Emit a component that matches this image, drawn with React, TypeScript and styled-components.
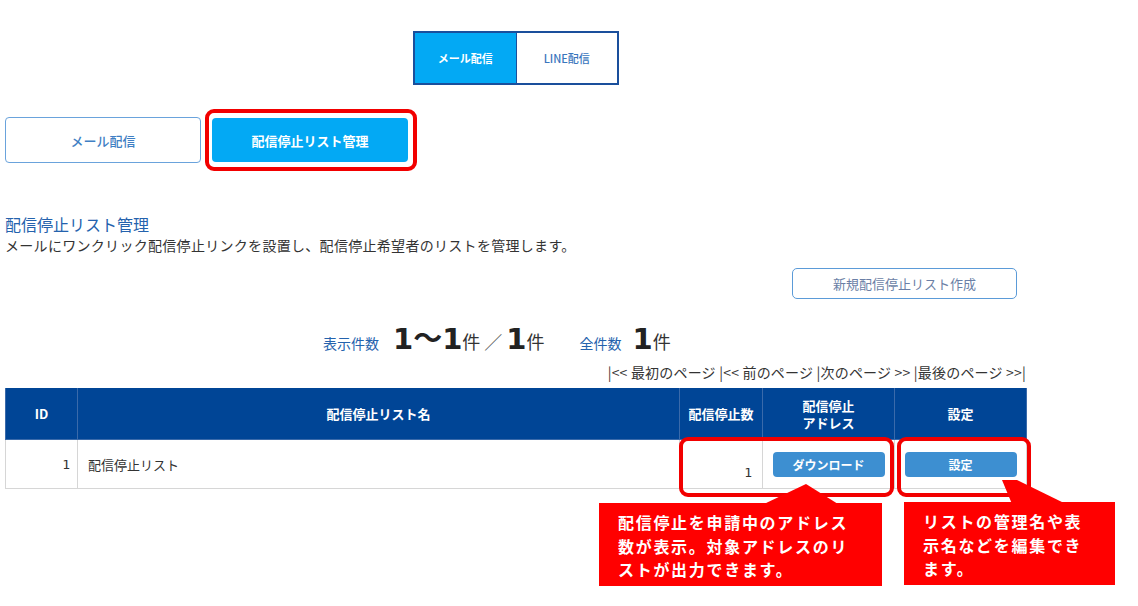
import styled, { createGlobalStyle } from "styled-components";

const GlobalStyle = createGlobalStyle`
  body {
    margin: 0;
    background: #ffffff;
    font-family: "Noto Sans CJK JP", "Noto Sans", sans-serif;
    color: #333333;
  }
`;

const rows = [{ id: 1, name: "配信停止リスト", count: 1 }];

const pagerLinks = ["<< 最初のページ ", "<< 前のページ ", "次のページ >> ", "最後のページ >>"];

function App() {
  return (
    <Page>
      <GlobalStyle />
      <Content>
        <TabGroup>
          <Tab $active>メール配信</Tab>
          <Tab>LINE配信</Tab>
        </TabGroup>

        <SubNav>
          <SubButton>メール配信</SubButton>
          <SubButton $active>配信停止リスト管理</SubButton>
        </SubNav>

        <Title>配信停止リスト管理</Title>
        <Description>
          メールにワンクリック配信停止リンクを設置し、配信停止希望者のリストを管理します。
        </Description>

        <ActionRow>
          <CreateButton>新規配信停止リスト作成</CreateButton>
        </ActionRow>

        <CountLine>
          <CountLabel>表示件数</CountLabel>
          <CountNumber>1〜1</CountNumber>
          <CountUnit>件</CountUnit>
          <Slash>／</Slash>
          <CountNumber>1</CountNumber>
          <CountUnit>件</CountUnit>
          <CountLabel $gap>全件数</CountLabel>
          <CountNumber>1</CountNumber>
          <CountUnit>件</CountUnit>
        </CountLine>

        <Pager>
          {pagerLinks.map((link) => (
            <span key={link}>|{link}</span>
          ))}
          |
        </Pager>

        <Table>
          <colgroup>
            <col style={{ width: 72 }} />
            <col />
            <col style={{ width: 83 }} />
            <col style={{ width: 132 }} />
            <col style={{ width: 132 }} />
          </colgroup>
          <thead>
            <tr>
              <Th>ID</Th>
              <Th>配信停止リスト名</Th>
              <Th>配信停止数</Th>
              <Th>
                配信停止
                <br />
                アドレス
              </Th>
              <Th>設定</Th>
            </tr>
          </thead>
          <tbody>
            {rows.map((row) => (
              <tr key={row.id}>
                <IdCell>{row.id}</IdCell>
                <NameCell>{row.name}</NameCell>
                <NumberCell>{row.count}</NumberCell>
                <ButtonCell>
                  <RowButton>ダウンロード</RowButton>
                </ButtonCell>
                <ButtonCell>
                  <RowButton>設定</RowButton>
                </ButtonCell>
              </tr>
            ))}
          </tbody>
        </Table>
      </Content>

      {/* explanation markers */}
      <Highlight style={{ left: 205, top: 109, width: 212, height: 62 }} />
      <Highlight style={{ left: 679, top: 437, width: 215, height: 60 }} />
      <Highlight style={{ left: 897, top: 437, width: 134, height: 60 }} />

      <Pointer width="1138" height="606">
        <polygon points="764,504 806,484 838,504" fill="#ff0000" />
        <polygon points="1002,480 1017,480 1066,504 1012,504" fill="#ff0000" />
      </Pointer>

      <Callout $padRight={30} style={{ left: 599, top: 503, width: 283, height: 83 }}>
        配信停止を申請中のアドレス数が表示。対象アドレスのリストが出力できます。
      </Callout>
      <Callout $padRight={20} style={{ left: 904, top: 502, width: 211, height: 83 }}>
        リストの管理名や表示名などを編集できます。
      </Callout>
    </Page>
  );
}

const Page = styled.div`
  position: relative;
  width: 1138px;
  height: 606px;
  overflow: hidden;
`;

const Content = styled.div`
  width: 1022px;
  margin-left: 5px;
  padding-top: 31px;
  display: flex;
  flex-direction: column;
`;

const TabGroup = styled.div`
  align-self: center;
  display: flex;
  border: 2px solid #1a4f9c;
  box-sizing: border-box;
  width: 206px;
  height: 54px;
`;

const Tab = styled.div<{ $active?: boolean }>`
  flex: 1;
  display: flex;
  align-items: center;
  justify-content: center;
  font-size: 11px;
  font-weight: ${(p) => (p.$active ? 700 : 500)};
  color: ${(p) => (p.$active ? "#ffffff" : "#3a76bd")};
  background: ${(p) => (p.$active ? "#03a9f4" : "#ffffff")};
  border-right: ${(p) => (p.$active ? "1px solid #1a4f9c" : "none")};
`;

const SubNav = styled.div`
  display: flex;
  gap: 11px;
  margin-top: 32px;
  align-items: center;
`;

const SubButton = styled.div<{ $active?: boolean }>`
  width: 196px;
  height: ${(p) => (p.$active ? "44px" : "46px")};
  box-sizing: border-box;
  display: flex;
  align-items: center;
  justify-content: center;
  border-radius: 4px;
  font-size: 13px;
  font-weight: ${(p) => (p.$active ? 700 : 500)};
  color: ${(p) => (p.$active ? "#ffffff" : "#3f7fc4")};
  background: ${(p) => (p.$active ? "#03a9f4" : "#ffffff")};
  border: ${(p) => (p.$active ? "none" : "1px solid #6aa3dc")};
`;

const Title = styled.h2`
  margin: 50px 0 0;
  font-size: 16px;
  font-weight: 400;
  line-height: 22px;
  color: #2462ad;
`;

const Description = styled.p`
  margin: 0;
  font-size: 14px;
  line-height: 20px;
  letter-spacing: 0.3px;
  color: #333333;
`;

const ActionRow = styled.div`
  display: flex;
  justify-content: flex-end;
  margin-top: 13px;
  padding-right: 10px;
`;

const CreateButton = styled.div`
  width: 225px;
  height: 31px;
  box-sizing: border-box;
  border: 1px solid #5b9bd8;
  border-radius: 5px;
  display: flex;
  align-items: center;
  justify-content: center;
  font-size: 13px;
  color: #6b7fa6;
`;

const CountLine = styled.div`
  display: flex;
  align-items: baseline;
  padding-left: 318px;
  margin-top: 16px;
  height: 46px;
`;

const CountLabel = styled.span<{ $gap?: boolean }>`
  font-size: 14px;
  color: #2462ad;
  margin-right: ${(p) => (p.$gap ? "11px" : "14px")};
  margin-left: ${(p) => (p.$gap ? "35px" : "0")};
`;

const CountNumber = styled.span`
  font-family: "DejaVu Sans", "Noto Sans CJK JP", sans-serif;
  font-size: 29px;
  font-weight: 700;
  color: #222222;
`;

const CountUnit = styled.span`
  font-size: 18px;
  color: #333333;
`;

const Slash = styled.span`
  font-size: 18px;
  color: #555555;
  margin: 0 4px;
`;

const Pager = styled.div`
  text-align: right;
  font-size: 14px;
  line-height: 20px;
  letter-spacing: 0.2px;
  color: #333333;
  padding-right: 1px;
  margin-top: 1px;
`;

const Table = styled.table`
  width: 1022px;
  margin-top: 6px;
  border-collapse: collapse;
  table-layout: fixed;
`;

const Th = styled.th`
  height: 51px;
  padding: 0;
  background: #004596;
  color: #ffffff;
  font-size: 13px;
  font-weight: 700;
  line-height: 17px;
  border: 1px solid #3a6aaa;
  border-top: none;
`;

const Td = styled.td`
  height: 48px;
  padding-top: 0;
  padding-bottom: 0;
  border: 1px solid #d6d6d6;
  font-size: 13px;
  color: #333333;
`;

const IdCell = styled(Td)`
  text-align: right;
  padding-right: 7px;
  font-family: "DejaVu Sans Mono", monospace;
`;

const NameCell = styled(Td)`
  padding-left: 10px;
`;

const NumberCell = styled(Td)`
  height: 40px;
  text-align: right;
  vertical-align: bottom;
  padding: 0 10px 8px 0;
  font-family: "DejaVu Sans Mono", monospace;
`;

const ButtonCell = styled(Td)`
  text-align: center;
`;

const RowButton = styled.div`
  display: inline-flex;
  align-items: center;
  justify-content: center;
  vertical-align: middle;
  width: 112px;
  height: 25px;
  border-radius: 4px;
  background: #3d8fd1;
  color: #ffffff;
  font-size: 12px;
  font-weight: 700;
`;

const Highlight = styled.div`
  position: absolute;
  box-sizing: border-box;
  border: 4px solid #f20000;
  border-radius: 9px;
  pointer-events: none;
`;

const Pointer = styled.svg`
  position: absolute;
  left: 0;
  top: 0;
  pointer-events: none;
`;

const Callout = styled.div<{ $padRight: number }>`
  position: absolute;
  box-sizing: border-box;
  background: #ff0000;
  color: #ffffff;
  font-size: 16px;
  font-weight: 700;
  line-height: 23.5px;
  letter-spacing: 1.7px;
  padding: 8px ${(p) => p.$padRight}px 0 19px;
`;

export default App;
